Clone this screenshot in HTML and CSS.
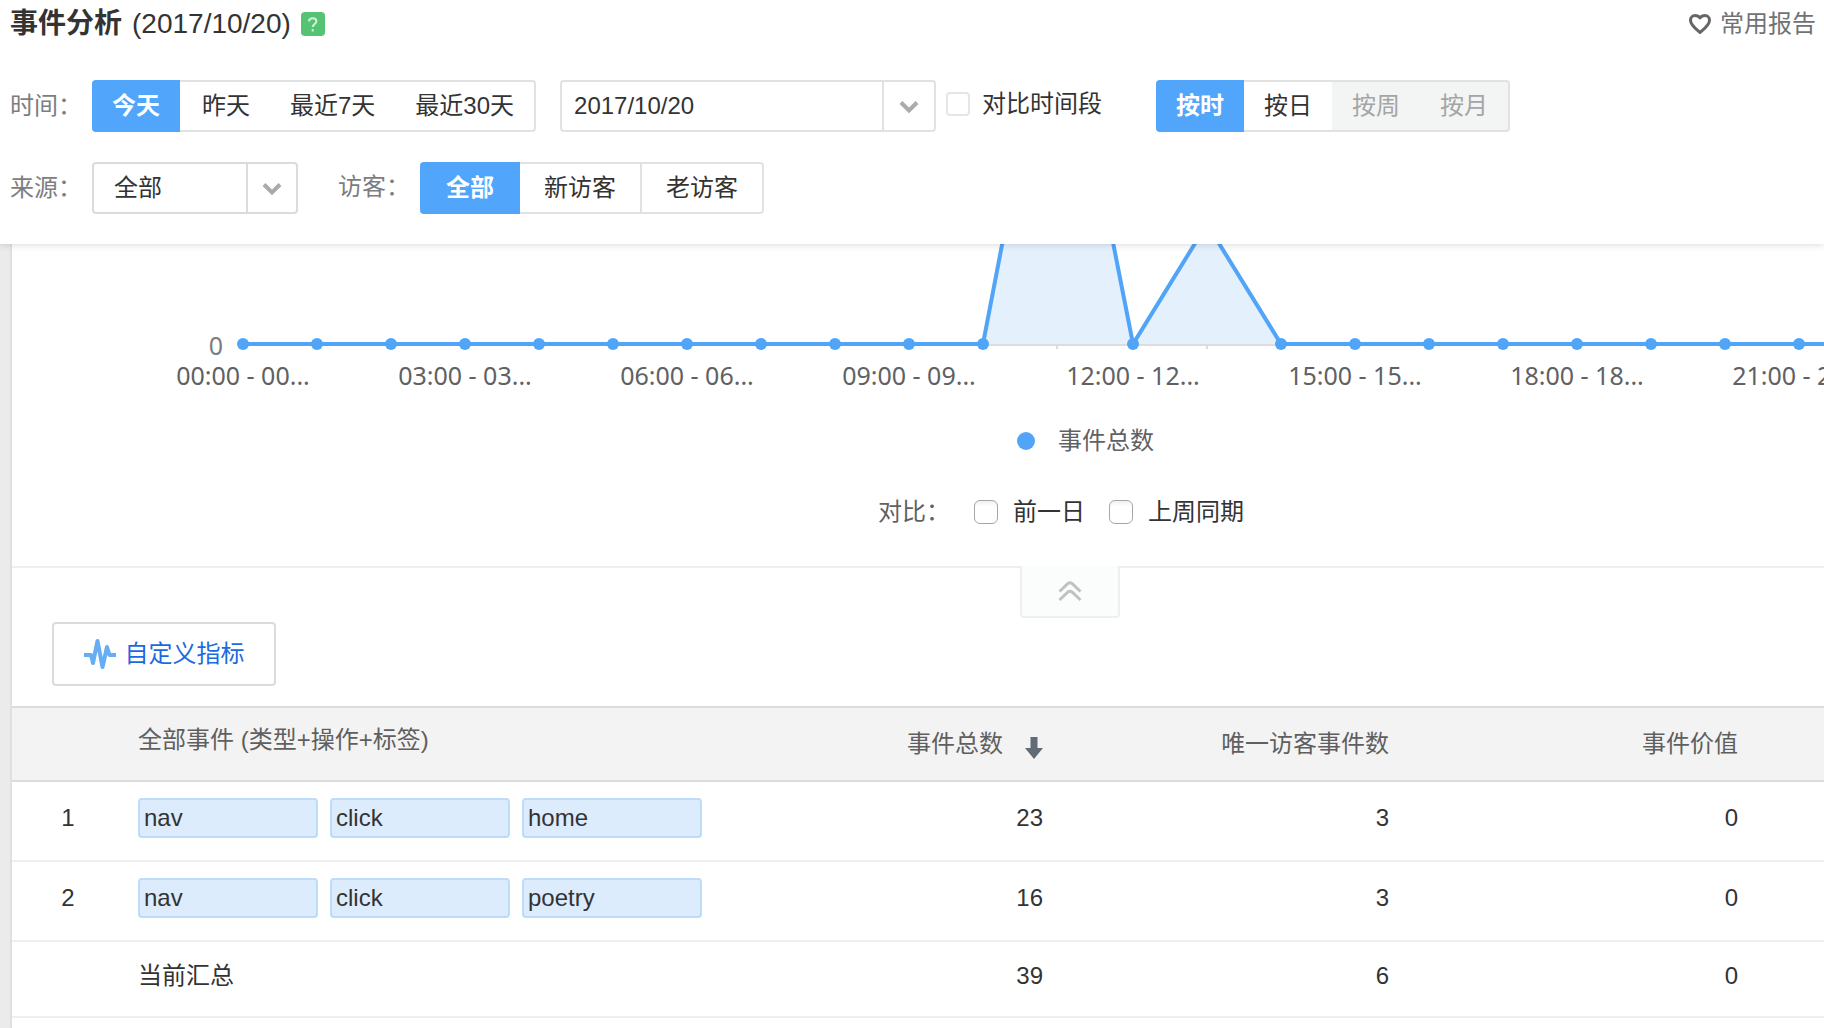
FILE: index.html
```html
<!DOCTYPE html>
<html lang="zh-CN">
<head>
<meta charset="utf-8">
<meta name="viewport" content="width=device-width, initial-scale=1">
<title>事件分析</title>
<link rel="stylesheet" href="styles.css">
</head>
<body>
<header class="toolbar">
  <div class="title-row">
    <h1 class="title">事件分析 <span class="title-date">(2017/10/20)</span></h1>
    <button class="help" type="button" aria-label="帮助">
      <svg width="24" height="24" viewBox="0 0 24 24" fill="none" stroke="#d3f0da" stroke-width="2"><path d="M8 9.500C8 7.400 9.500 6.300 11.700 6.300s3.700 1.100 3.700 3c0 2.600-3.600 2.800-3.600 5.600"/><path d="M11.700 17v2.500"/></svg>
    </button>
    <a class="favorite" href="#">
      <svg width="24" height="22" viewBox="0 0 24 22" fill="none" stroke="#666" stroke-width="3" stroke-linejoin="round"><path d="M12 19.500C8 16 2.500 12 2.500 7.200C2.500 4.200 4.600 2.500 7 2.500c2.100 0 4 1 5 2.500 1-1.500 2.900-2.500 5-2.500 2.400 0 4.500 1.700 4.500 4.700C21.500 12 16 16 12 19.500z"/></svg>
      常用报告
    </a>
  </div>

  <div class="filter-row">
    <span class="filter-label">时间：</span>
    <div class="segments" role="group" aria-label="时间">
      <button type="button" class="segment active">今天</button>
      <button type="button" class="segment">昨天</button>
      <button type="button" class="segment">最近7天</button>
      <button type="button" class="segment">最近30天</button>
    </div>
    <div class="date-box">
      <input class="date-input" type="text" value="2017/10/20" aria-label="日期">
      <button class="arrow-cell" type="button" aria-label="选择日期">
        <svg width="20" height="14" viewBox="0 0 20 14" fill="none" stroke="#a8aaab" stroke-width="4"><path d="M2 2.500l8 8 8-8"/></svg>
      </button>
    </div>
    <label class="check-label period-label"><input class="check check-light" type="checkbox">对比时间段</label>
    <div class="segments grain" role="group" aria-label="粒度">
      <button type="button" class="segment active">按时</button>
      <button type="button" class="segment">按日</button>
      <button type="button" class="segment" disabled>按周</button>
      <button type="button" class="segment" disabled>按月</button>
    </div>
  </div>

  <div class="filter-row">
    <label class="filter-label" for="source">来源：</label>
    <div class="select-box">
      <select id="source" class="select"><option>全部</option></select>
      <span class="arrow-cell select-arrow">
        <svg width="20" height="14" viewBox="0 0 20 14" fill="none" stroke="#a8aaab" stroke-width="4"><path d="M2 2.500l8 8 8-8"/></svg>
      </span>
    </div>
    <span class="filter-label visitor-label">访客：</span>
    <div class="segments visitors" role="group" aria-label="访客">
      <button type="button" class="segment active">全部</button>
      <button type="button" class="segment">新访客</button>
      <button type="button" class="segment">老访客</button>
    </div>
  </div>
</header>

<main class="panel">
  <section class="chart-section">
    <svg class="chart" width="100%" height="160" role="img" aria-label="事件总数">
      <path d="M231 101H2000" stroke="#ddd" stroke-width="2"/>
      <path d="M1045 101v4M1195 101v4" stroke="#ddd" stroke-width="2"/>
      <path class="area" d="M971 100L1045-286L1121 100L1195-20L1269 100z"/>
      <path class="line" d="M231 100H971L1045-286L1121 100L1195-20L1269 100H2000"/>
      <g class="dots">
        <circle cx="231" cy="100" r="6"/><circle cx="305" cy="100" r="6"/><circle cx="379" cy="100" r="6"/>
        <circle cx="453" cy="100" r="6"/><circle cx="527" cy="100" r="6"/><circle cx="601" cy="100" r="6"/>
        <circle cx="675" cy="100" r="6"/><circle cx="749" cy="100" r="6"/><circle cx="823" cy="100" r="6"/>
        <circle cx="897" cy="100" r="6"/><circle cx="971" cy="100" r="6"/><circle cx="1121" cy="100" r="6"/>
        <circle cx="1269" cy="100" r="6"/><circle cx="1343" cy="100" r="6"/><circle cx="1417" cy="100" r="6"/>
        <circle cx="1491" cy="100" r="6"/><circle cx="1565" cy="100" r="6"/><circle cx="1639" cy="100" r="6"/>
        <circle cx="1713" cy="100" r="6"/><circle cx="1787" cy="100" r="6"/>
      </g>
      <text class="axis axis-y" x="211" y="111">0</text>
      <g class="axis">
        <text x="231" y="141">00:00 - 00...</text>
        <text x="453" y="141">03:00 - 03...</text>
        <text x="675" y="141">06:00 - 06...</text>
        <text x="897" y="141">09:00 - 09...</text>
        <text x="1121" y="141">12:00 - 12...</text>
        <text x="1343" y="141">15:00 - 15...</text>
        <text x="1565" y="141">18:00 - 18...</text>
        <text x="1787" y="141">21:00 - 21...</text>
      </g>
    </svg>
    <div class="legend"><span class="legend-dot"></span>事件总数</div>
    <div class="compare">
      <span class="compare-title">对比：</span>
      <label class="check-label"><input class="check" type="checkbox">前一日</label>
      <label class="check-label"><input class="check" type="checkbox">上周同期</label>
    </div>
  </section>

  <section class="table-section">
    <button class="collapse" type="button" aria-label="收起">
      <svg width="24" height="22" viewBox="0 0 24 22" fill="none" stroke="#c0c2c2" stroke-width="3"><path d="M1.500 11.500L10 3.500q2-1.500 4 0l8.500 8"/><path d="M1.500 20L10 12q2-1.500 4 0l8.500 8"/></svg>
    </button>
    <button class="metrics" type="button">
      <svg width="32" height="32" viewBox="0 0 32 32" fill="none" stroke="#65adf5" stroke-width="4" stroke-linejoin="round"><path d="M0 17H7L9 25L13.500 3L18.500 29L23 9L25.500 17H32"/></svg>
      自定义指标
    </button>
    <table class="events">
      <colgroup><col class="col-index"><col><col class="col-total"><col class="col-unique"><col class="col-value"></colgroup>
      <thead>
        <tr>
          <th></th>
          <th class="name">全部事件 (类型+操作+标签)</th>
          <th class="num"><span class="sorted">事件总数<svg width="18" height="22" viewBox="0 0 18 22" fill="#5f6b76"><path d="M5.500 0h7v11H18L9 22L0 11h5.500z"/></svg></span></th>
          <th class="num">唯一访客事件数</th>
          <th class="num last">事件价值</th>
        </tr>
      </thead>
      <tbody>
        <tr>
          <td class="index">1</td>
          <td class="name"><div class="tags"><span class="tag">nav</span><span class="tag">click</span><span class="tag">home</span></div></td>
          <td class="num">23</td><td class="num">3</td><td class="num last">0</td>
        </tr>
        <tr>
          <td class="index">2</td>
          <td class="name"><div class="tags"><span class="tag">nav</span><span class="tag">click</span><span class="tag">poetry</span></div></td>
          <td class="num">16</td><td class="num">3</td><td class="num last">0</td>
        </tr>
      </tbody>
      <tfoot>
        <tr>
          <td></td>
          <td class="name">当前汇总</td>
          <td class="num">39</td><td class="num">6</td><td class="num last">0</td>
        </tr>
      </tfoot>
    </table>
  </section>
</main>
</body>
</html>
```

FILE: styles.css
```css
* {
  box-sizing: border-box;
}

html {
  height: 100%;
}

body {
  display: flex;
  flex-direction: column;
  min-height: 100%;
  margin: 0;
  overflow-x: hidden;
  background: #ebebeb;
  color: #333;
  font-family: "Liberation Sans", "Noto Sans CJK SC", sans-serif;
  font-size: 24px;
  line-height: 32px;
}

button,
input,
select {
  margin: 0;
  padding: 0;
  border: 0;
  border-radius: 0;
  background: none;
  color: inherit;
  font: inherit;
}

svg {
  display: block;
  flex: none;
}

/* Filter toolbar */

.toolbar {
  position: relative;
  z-index: 1;
  display: flex;
  flex-direction: column;
  gap: 30px;
  padding: 0 8px 30px 10px;
  background: #fff;
  box-shadow: 0 0 8px rgba(0, 0, 0, 0.18);
}

.title-row {
  display: flex;
  align-items: center;
  height: 50px;
  padding-bottom: 2px;
}

.title {
  display: flex;
  gap: 10px;
  margin: 0;
  font-size: 28px;
  line-height: 48px;
}

.title-date {
  font-weight: 400;
}

.help {
  margin-left: 10px;
  border-radius: 4px;
  background: #55c274;
}

.favorite {
  display: flex;
  align-items: center;
  gap: 8px;
  margin-left: auto;
  color: #707274;
  text-decoration: none;
}

.filter-row {
  display: flex;
  align-items: center;
  height: 52px;
  white-space: nowrap;
}

.filter-label {
  width: 82px;
  color: #7b7d7f;
}

.segments {
  display: flex;
  height: 52px;
}

.segment {
  padding: 0 20px;
  border: solid #e0e2e2;
  border-width: 2px 0;
}

.segment.active {
  border-color: #51a5fa;
  border-radius: 4px 0 0 4px;
  background: #51a5fa;
  color: #fff;
  font-weight: 700;
}

.segment.active + .segment {
  padding-left: 22px;
}

.segment:last-child {
  border-right-width: 2px;
  border-radius: 0 4px 4px 0;
}

.segment:disabled {
  background: #f3f5f4;
  color: #a3a5a6;
}

.grain {
  margin-left: auto;
  margin-right: 306px;
}

.grain .active + .segment {
  padding-left: 20px;
}

.visitors .segment,
.visitors .active + .segment {
  padding: 0 24px;
}

.visitors .active {
  padding: 0 26px;
}

.visitors .active + .segment {
  border-right-width: 2px;
}

.date-box,
.select-box {
  display: flex;
  height: 52px;
  border: 2px solid #e0e2e2;
  border-radius: 4px;
}

.date-box {
  width: 376px;
  margin: 0 10px 0 24px;
}

.date-input {
  flex: 1;
  min-width: 0;
  padding-left: 12px;
}

.arrow-cell {
  display: flex;
  align-items: center;
  justify-content: center;
  flex: none;
  width: 52px;
  padding-top: 2px;
  border-left: 2px solid #e0e2e2;
}

.select-box {
  position: relative;
  width: 206px;
  border-color: #dadcdc;
}

.select {
  width: 100%;
  padding-left: 20px;
  appearance: none;
}

.select-arrow {
  position: absolute;
  top: 0;
  right: 0;
  bottom: 0;
  width: 50px;
  border-color: #dadcdc;
  pointer-events: none;
}

.visitor-label {
  margin-left: 40px;
  padding-bottom: 2px;
}

.check-label {
  display: flex;
  align-items: center;
  gap: 12px;
}

.period-label {
  padding-bottom: 4px;
}

.check {
  width: 24px;
  height: 24px;
  border: 1px solid #a6a6a6;
  border-radius: 6px;
  background: linear-gradient(#f1f1f1, #fff 6px);
  appearance: none;
}

.check-light {
  border: 2px solid #e6e6e6;
  border-radius: 4px;
  background: #fff;
}

/* Report panel */

.panel {
  flex: 1;
  margin-left: 10px;
  border-left: 2px solid #dfdfdf;
  background: #fff;
}

.chart-section {
  height: 322px;
}

.area {
  fill: #e4f0fc;
}

.line {
  fill: none;
  stroke: #51a5f8;
  stroke-width: 4px;
}

.dots {
  fill: #51a5f8;
}

.axis {
  fill: #5f6163;
  font-family: "Noto Sans", sans-serif;
  font-size: 25px;
  text-anchor: middle;
}

.axis-y {
  fill: #7b7d7f;
  text-anchor: end;
}

.legend {
  display: flex;
  align-items: center;
  gap: 23px;
  margin-top: 21px;
  padding-left: 1005px;
  color: #5f6163;
}

.legend-dot {
  width: 18px;
  height: 18px;
  border-radius: 50%;
  background: #51a5f8;
}

.compare {
  display: flex;
  align-items: center;
  gap: 24px;
  margin-top: 39px;
  padding-left: 866px;
}

.compare .check-label {
  gap: 15px;
}

.compare-title {
  color: #5f6163;
}

.table-section {
  position: relative;
  padding-top: 54px;
  border-top: 2px solid #eee;
}

/* Tab hanging from the section's top border */
.collapse {
  position: absolute;
  top: -2px;
  left: 1008px;
  display: flex;
  align-items: center;
  justify-content: center;
  width: 100px;
  height: 52px;
  border: 2px solid #eef0ef;
  border-top: 0;
  border-radius: 0 0 4px 4px;
  background: #fbfdfc;
}

.metrics {
  display: flex;
  align-items: center;
  justify-content: center;
  gap: 9px;
  width: 224px;
  height: 64px;
  margin: 0 0 20px 40px;
  border: 2px solid #dadcdc;
  border-radius: 4px;
  color: #1c69e0;
}

.events {
  width: 100%;
  border-collapse: separate;
  border-spacing: 0;
  table-layout: fixed;
}

.col-index {
  width: 112px;
}

.col-total {
  width: 17.2%;
}

.col-unique {
  width: 19.1%;
}

.col-value {
  width: 24%;
}

.events th,
.events td {
  padding: 0;
  text-align: left;
}

.events th {
  height: 76px;
  border: solid #dcdcdc;
  border-width: 2px 0;
  background: #f3f3f3;
  color: #5f5f5f;
  font-weight: 400;
}

.events td {
  height: 80px;
  padding-bottom: 6px;
  border-bottom: 2px solid #eee;
}

.events tfoot td {
  height: 76px;
}

.events .index {
  text-align: center;
}

.events .name {
  padding-left: 14px;
}

.events th.name {
  padding-bottom: 8px;
}

.events .num {
  text-align: right;
}

.events .last {
  padding-right: 86px;
}

.sorted {
  display: flex;
  align-items: center;
  justify-content: flex-end;
  gap: 22px;
}

.sorted svg {
  margin-top: 8px;
}

.tags {
  display: flex;
  gap: 12px;
}

.tag {
  width: 180px;
  padding: 2px 4px;
  border: 2px solid #bfdbfa;
  border-radius: 4px;
  background: #dcecfd;
}
```
